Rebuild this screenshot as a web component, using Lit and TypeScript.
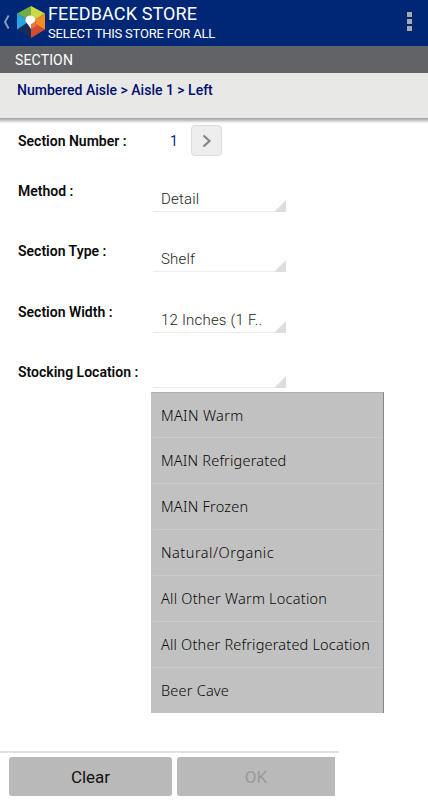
import { LitElement, html, css, nothing } from "lit";
import { customElement, property } from "lit/decorators.js";

@customElement("form-row")
class FormRow extends LitElement {
  @property() label = "";
  @property() value = "";
  static styles = css`
    :host { display: flex; align-items: flex-start; box-sizing: border-box; padding-left: 18px; }
    .label { width: 135px; font-size: 14px; line-height: 20px; font-weight: 600; color: #0a0a0a; white-space: nowrap; }
    .select { width: 133px; height: 31px; display: flex; align-items: flex-end; box-sizing: border-box; border-bottom: 1px solid #ececec; }
    .empty { height: 26px; }
    .value { flex: 1; padding: 0 0 2px 8px; font-size: 15px; line-height: 20px; font-weight: 300; color: #222; white-space: nowrap; letter-spacing: 0.2px; }
    .corner { width: 12px; height: 12px; flex: none; display: block; margin: 0 0 -1px; }
  `;
  render() {
    return html`<div class="label">${this.label}</div>
      <slot><div class="select ${this.value ? "" : "empty"}">
        <div class="value">${this.value || nothing}</div>
        <svg class="corner" viewBox="0 0 12 12"><path d="M12 0V12H0Z" fill="#dedede" /></svg>
      </div></slot>`;
  }
}

@customElement("app-root")
class AppRoot extends LitElement {
  static styles = css`
    :host { display: flex; flex-direction: column; height: 800px; width: 428px; overflow: hidden; background: #fff; font-family: Roboto, sans-serif; position: relative; }
    .header { height: 46px; flex: none; background: #002776; display: flex; color: #fff; }
    .back { width: 7px; height: 14px; margin: 15px 6px 0 3px; flex: none; }
    .logo { width: 30px; height: 34px; margin: 5px 2px 0 0; flex: none; }
    .titles { flex: 1; white-space: nowrap; }
    .title { font-size: 18px; line-height: 22px; margin-top: 3px; letter-spacing: 0.12px; }
    .subtitle { font-size: 13px; line-height: 16px; margin-top: 1px; letter-spacing: -0.22px; }
    .more { width: 5px; margin: 12px 16px 0 0; display: flex; flex-direction: column; gap: 2px; }
    .more span { height: 5px; background: #a9a9ae; }
    .section { height: 27px; flex: none; background: #626366; color: #fff; font-size: 14px; line-height: 28px; padding-left: 15px; letter-spacing: 0.15px; }
    .crumbs { height: 45px; flex: none; background: #e8e8e6; color: #000f70; font-size: 14px; line-height: 20px; font-weight: 500; padding: 7px 0 0 17px; box-sizing: border-box; }
    .shade { height: 6px; flex: none; background: linear-gradient(#a0a0a0, #c0c0c0 35%, #f2f2f2 75%, #fff); }
    .form { flex: 1; }
    .first { height: 57px; padding-top: 7px; }
    .number { display: flex; height: 31px; margin-top: -6px; }
    .digit { width: 38px; box-sizing: border-box; padding-left: 17px; color: #0a2a80; font-size: 14px; line-height: 33px; }
    .next { width: 31px; height: 31px; box-sizing: border-box; border: 1px solid #dcdcdc; border-radius: 4px; background: #eee; display: flex; align-items: center; justify-content: center; }
    .field { height: 60.3px; }
    .menu { position: absolute; left: 151px; top: 392px; width: 233px; height: 321px; box-sizing: border-box; background: #c1c1c1; border-top: 1px solid #b0b0b0; border-right: 1px solid #858585; padding: 0 1px 0 2px; }
    .item { height: 46px; box-sizing: border-box; border-bottom: 1px solid #cbcbcb; padding-left: 8px; line-height: 45px; font-family: "Noto Sans", sans-serif; font-weight: 300; font-size: 14.5px; color: #080808; white-space: nowrap; }
    .item:first-child { height: 45px; line-height: 44px; }
    .item:last-child { border: 0; height: 45px; }
    .footer { width: 339px; height: 49px; flex: none; box-sizing: border-box; border-top: 2px solid #e0e0e0; display: flex; gap: 5px; padding: 4px 4px 0 9px; }
    .btn { height: 39px; background: #b9b9b9; border-radius: 3px; text-align: center; font-size: 17px; line-height: 40px; color: #111; flex: none; }
    .clear { width: 163px; }
    .ok { width: 158px; color: #999; border-radius: 3px 0 0 3px; }
  `;
  private items: [string, number][] = [
    ["MAIN Warm", 0.33],
    ["MAIN Refrigerated", 0.2],
    ["MAIN Frozen", 0.23],
    ["Natural/Organic", 0.5],
    ["All Other Warm Location", 0.24],
    ["All Other Refrigerated Location", 0.19],
    ["Beer Cave", 0.2],
  ];
  render() {
    return html`
      <div class="header">
        <svg class="back" viewBox="0 0 7 14"><path d="M5.6 .5L2 7L5.6 13.5" fill="none" stroke="#8d9cc0" stroke-width="1.9" /></svg>
        <svg class="logo" viewBox="0 0 30 34">
          <path d="M15 1V17L1 8.5Z" fill="#6fae45" />
          <path d="M15 1L29 8.500L15 17Z" fill="#cbd944" />
          <path d="M29 8.500V24.500L20 21L19 14.500Z" fill="#f28b28" />
          <path d="M29 24.500L15 33V23L20 19Z" fill="#d44a33" />
          <path d="M19 14.500L20.500 21L15 24V18Z" fill="#e8743a" />
          <path d="M15 33L1 24.500L10 18L15 23Z" fill="#172c58" />
          <path d="M1 8.500L10 14V18.500L1 24.500Z" fill="#2aa4dc" />
          <path d="M14.500 10.500Q19 11 19.500 15Q19 17.500 15 19V24Q12.500 19.500 10.500 18Q9 16.500 9.500 14Q10.500 10.800 14.500 10.500Z" fill="#fff" />
        </svg>
        <div class="titles"><div class="title">FEEDBACK STORE</div><div class="subtitle">SELECT THIS STORE FOR ALL</div></div>
        <div class="more"><span></span><span></span><span></span></div>
      </div>
      <div class="section">SECTION</div>
      <div class="crumbs">Numbered Aisle &gt; Aisle 1 &gt; Left</div>
      <div class="shade"></div>
      <div class="form">
        <form-row class="first" label="Section Number :"><div class="number"><div class="digit">1</div><div class="next">
          <svg width="10" height="14" viewBox="0 0 10 14"><path d="M1.5 1.5L7.5 7L1.5 12.5" fill="none" stroke="#858585" stroke-width="2.2" /></svg>
        </div></div></form-row>
        <form-row class="field" label="Method :" value="Detail"></form-row>
        <form-row class="field" label="Section Type :" value="Shelf"></form-row>
        <form-row class="field" label="Section Width :" value="12 Inches (1 F.."></form-row>
        <form-row class="field" label="Stocking Location :"></form-row>
      </div>
      <div class="menu">${this.items.map(([t, s]) => html`<div class="item" style="letter-spacing:${s}px">${t}</div>`)}</div>
      <div class="footer"><div class="btn clear">Clear</div><div class="btn ok">OK</div></div>
    `;
  }
}
